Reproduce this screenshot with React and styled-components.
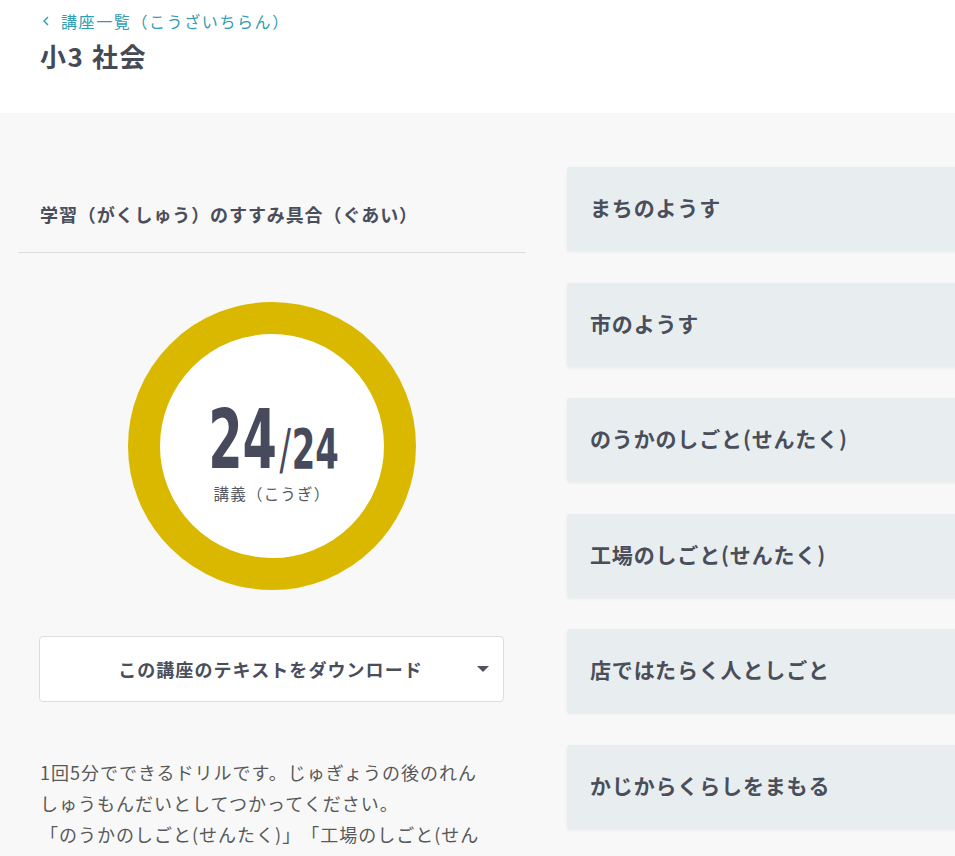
import styled, { createGlobalStyle } from "styled-components";

const GlobalStyle = createGlobalStyle`
  html, body {
    margin: 0;
    padding: 0;
    background: #f8f8f8;
    overflow: hidden;
  }
  body {
    font-family: "Noto Sans CJK JP", "Noto Sans", sans-serif;
    color: #4a4e5a;
    letter-spacing: 0.05em;
    text-spacing-trim: space-all;
  }
`;

const Header = styled.header`
  background: #ffffff;
  height: 113px;
  box-sizing: border-box;
  padding: 8px 40px 0;
`;

const BackLink = styled.a`
  display: flex;
  align-items: center;
  gap: 11px;
  padding-left: 2px;
  height: 26px;
  color: #2e9db2;
  font-size: 16px;
  letter-spacing: 0.1em;
  text-decoration: none;
  svg {
    width: 8px;
    height: 10px;
  }
`;

const Title = styled.h1`
  margin: 2px 0 0;
  font-size: 26px;
  line-height: 40px;
  font-weight: 700;
  color: #464a57;
  letter-spacing: 0.06em;
`;

const Main = styled.main`
  display: flex;
  gap: 41px;
  padding: 54px 0 0 18px;
  width: 1000px;
`;

const LeftCol = styled.section`
  width: 508px;
  flex-shrink: 0;
`;

const ProgressHeading = styled.h2`
  margin: 0;
  height: 86px;
  box-sizing: border-box;
  padding: 8px 0 0 22px;
  display: flex;
  align-items: center;
  font-size: 18px;
  font-weight: 700;
  color: #4a4e5a;
  border-bottom: 1px solid #dedede;
  letter-spacing: 0.05em;
`;

const RingWrap = styled.div`
  display: flex;
  justify-content: center;
  padding: 49px 0 0;
`;

const Ring = styled.div`
  width: 288px;
  height: 288px;
  box-sizing: border-box;
  border: 32px solid #dbb800;
  border-radius: 50%;
  background: #ffffff;
  display: flex;
  flex-direction: column;
  align-items: center;
  justify-content: center;
  padding-top: 10px;
`;

const Count = styled.div`
  display: flex;
  align-items: baseline;
  font-family: "DejaVu Sans Condensed", "DejaVu Sans", sans-serif;
  font-weight: 700;
  color: #464a5c;
  transform: scaleX(0.67);
  line-height: 1;
  letter-spacing: 0;
  margin-left: 2px;
`;

const Num = styled.span`
  font-size: ${(p) => p.size}px;
`;

const Slash = styled.span`
  font-size: 56px;
  font-weight: 400;
  margin: 0 1px 0 4px;
`;

const Unit = styled.div`
  margin-top: 1px;
  font-size: 15.5px;
  line-height: 22px;
  color: #555a63;
  letter-spacing: 0.08em;
`;

const DownloadButton = styled.button`
  display: flex;
  align-items: center;
  justify-content: center;
  position: relative;
  margin: 46px 0 0 21px;
  width: 465px;
  height: 66px;
  background: #ffffff;
  border: 1px solid #dddddd;
  border-radius: 4px;
  font-family: inherit;
  font-size: 18px;
  font-weight: 700;
  color: #4a4e5a;
  letter-spacing: 0.06em;
  padding: 0;
  span {
    margin-right: 2px;
  }
`;

const Caret = styled.svg`
  position: absolute;
  right: 14px;
  top: 29px;
  width: 12px;
  height: 7px;
`;

const Description = styled.p`
  margin: 55px 0 0 22px;
  width: 452px;
  font-size: 18px;
  line-height: 31px;
  color: #585858;
  letter-spacing: 1px;
`;

const RightCol = styled.section`
  display: flex;
  flex-direction: column;
  gap: 31.6px;
  width: 400px;
  flex-shrink: 0;
`;

const Card = styled.div`
  height: 84px;
  box-sizing: border-box;
  padding: 0 0 4px 23px;
  display: flex;
  align-items: center;
  background: #e8eef0;
  border-radius: 3px;
  box-shadow: 0 1px 3px rgba(0, 0, 0, 0.06);
  font-size: 21px;
  font-weight: 700;
  color: #4a4e5a;
  letter-spacing: 0.04em;
`;

const units = [
  "まちのようす",
  "市のようす",
  "のうかのしごと(せんたく)",
  "工場のしごと(せんたく)",
  "店ではたらく人としごと",
  "かじからくらしをまもる",
];

export default function App() {
  return (
    <>
      <GlobalStyle />
      <Header>
        <BackLink href="#">
          <svg viewBox="0 0 8 10">
            <path d="M6 1 L2 5 L6 9" fill="none" stroke="#2e9db2" strokeWidth="1.4" />
          </svg>
          講座一覧（こうざいちらん）
        </BackLink>
        <Title>小3 社会</Title>
      </Header>
      <Main>
        <LeftCol>
          <ProgressHeading>学習（がくしゅう）のすすみ具合（ぐあい）</ProgressHeading>
          <RingWrap>
            <Ring>
              <Count>
                <Num size={82}>24</Num>
                <Slash>/</Slash>
                <Num size={56}>24</Num>
              </Count>
              <Unit>講義（こうぎ）</Unit>
            </Ring>
          </RingWrap>
          <DownloadButton>
            <span>この講座のテキストをダウンロード</span>
            <Caret viewBox="0 0 12 7">
              <path d="M0 0 H12 L6 6 Z" fill="#4f535c" />
            </Caret>
          </DownloadButton>
          <Description>
            1回5分でできるドリルです。じゅぎょうの後のれんしゅうもんだいとしてつかってください。
            <br />
            「のうかのしごと(せんたく)」「工場のしごと(せんたく)」はどちらかをえらんでください。
          </Description>
        </LeftCol>
        <RightCol>
          {units.map((u) => (
            <Card key={u}>{u}</Card>
          ))}
        </RightCol>
      </Main>
    </>
  );
}
